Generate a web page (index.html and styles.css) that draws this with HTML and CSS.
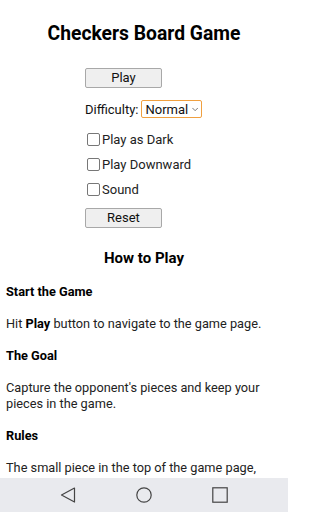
FILE: index.html
```html
<!DOCTYPE html>
<html>
<head>
<meta charset="utf-8">
<meta name="viewport" content="width=288, initial-scale=1">
<link rel="stylesheet" href="styles.css">
</head>
<body>
<div class="page">
  <h1 class="title">Checkers Board Game</h1>
  <div class="controls">
    <button class="btn">Play</button>
    <div class="diff-row">
      <span>Difficulty:</span>
      <span class="select">Normal <svg class="chev" width="8" height="5" viewBox="0 0 8 5"><path d="M0.5 0.5 L4 4 L7.5 0.5" fill="none" stroke="#555" stroke-width="1"/></svg></span>
    </div>
    <div class="checks">
      <label class="check"><span class="box"></span>Play as Dark</label>
      <label class="check"><span class="box"></span>Play Downward</label>
      <label class="check"><span class="box"></span>Sound</label>
    </div>
    <button class="btn reset">Reset</button>
  </div>
  <h2 class="subtitle">How to Play</h2>
  <div class="help">
    <h3>Start the Game</h3>
    <p>Hit <b>Play</b> button to navigate to the game page.</p>
    <h3>The Goal</h3>
    <p>Capture the opponent's pieces and keep your pieces in the game.</p>
    <h3>Rules</h3>
    <p>The small piece in the top of the game page, shows whose turn it is.</p>
  </div>
</div>
<div class="navbar">
  <svg width="16" height="16" viewBox="0 0 16 16"><path d="M14.5 1 L1.5 8 L14.5 15 Z" fill="none" stroke="#444" stroke-width="1.2" stroke-linejoin="round"/></svg>
  <svg width="16" height="16" viewBox="0 0 16 16"><circle cx="8" cy="8" r="7.2" fill="none" stroke="#444" stroke-width="1.2"/></svg>
  <svg width="16" height="16" viewBox="0 0 16 16"><rect x="0.8" y="0.8" width="14.4" height="14.4" fill="none" stroke="#444" stroke-width="1.2"/></svg>
</div>
</body>
</html>
```

FILE: styles.css
```css
html, body {
  margin: 0;
  padding: 0;
  width: 288px;
  height: 512px;
  overflow: hidden;
  background: #fff;
}
body {
  font-family: Roboto, "Liberation Sans", sans-serif;
  color: #111;
  position: relative;
}
.page {
  padding: 0 6px;
}
.title {
  margin: 0;
  padding-top: 22px;
  font-size: 19.3px;
  line-height: 24px;
  font-weight: 700;
  text-align: center;
  color: #000;
}
.controls {
  display: flex;
  flex-direction: column;
  align-items: flex-start;
  margin-left: 79px;
  margin-top: 22px;
}
.btn {
  width: 77px;
  height: 20px;
  margin: 0;
  padding: 0;
  border: 1px solid #a8a8a8;
  border-radius: 2px;
  background: #efefef;
  font-family: Roboto, "Liberation Sans", sans-serif;
  font-size: 13px;
  color: #111;
  line-height: 18px;
}
.diff-row {
  display: flex;
  align-items: center;
  gap: 3px;
  margin-top: 12px;
  font-size: 13px;
  height: 18px;
}
.select {
  display: flex;
  align-items: center;
  height: 18px;
  box-sizing: border-box;
  border: 1px solid #f0a040;
  border-radius: 2px;
  padding: 0 3px 0 3px;
  gap: 4px;
  font-size: 13px;
  width: 61px;
}
.checks {
  display: flex;
  flex-direction: column;
  margin-top: 15px;
  margin-left: 2px;
  gap: 12px;
}
.check {
  display: flex;
  align-items: center;
  font-size: 13px;
  line-height: 13px;
  height: 13px;
  color: #222;
}
.box {
  width: 11px;
  height: 11px;
  border: 1px solid #777;
  border-radius: 2px;
  margin-right: 2px;
  box-sizing: content-box;
}
.reset {
  margin-top: 12px;
}
.subtitle {
  margin: 22px 0 0;
  font-size: 15px;
  line-height: 16px;
  text-align: center;
  font-weight: 700;
  color: #000;
}
.help {
  padding-top: 18px;
}
.help h3 {
  margin: 0;
  font-size: 12.75px;
  line-height: 16px;
  font-weight: 700;
  color: #000;
}
.help p {
  margin: 16px 0;
  font-size: 12.75px;
  line-height: 16px;
  color: #222;
}
.help b {
  color: #000;
}
.navbar {
  position: absolute;
  left: 0;
  width: 288px;
  top: 478px;
  height: 34px;
  box-sizing: border-box;
  background: #e9eaee;
  display: flex;
  align-items: center;
  justify-content: space-between;
  padding: 0 60px;
}
.navbar svg {
  display: block;
}
```
